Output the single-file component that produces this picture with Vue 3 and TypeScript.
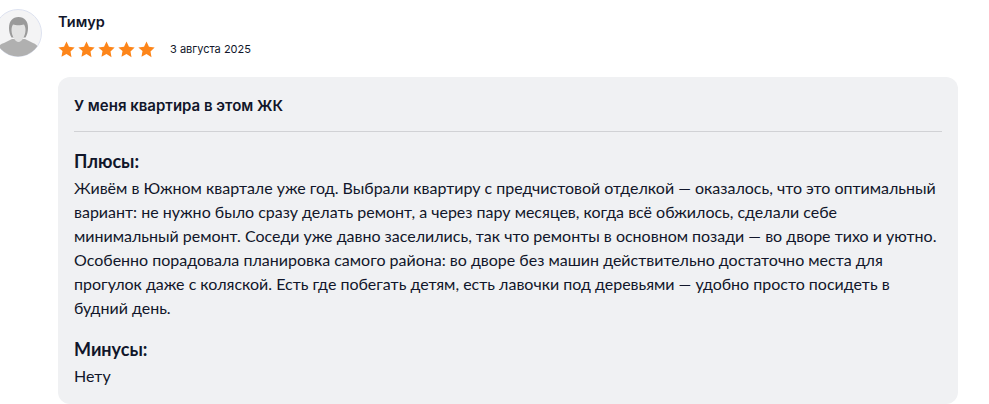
<script setup lang="ts">
const review = {
  name: 'Тимур',
  date: '3 августа 2025',
  title: 'У меня квартира в этом ЖК',
  pros: 'Живём в Южном квартале уже год. Выбрали квартиру с предчистовой отделкой — оказалось, что это оптимальный вариант: не нужно было сразу делать ремонт, а через пару месяцев, когда всё обжилось, сделали себе минимальный ремонт. Соседи уже давно заселились, так что ремонты в основном позади — во дворе тихо и уютно. Особенно порадовала планировка самого района: во дворе без машин действительно достаточно места для прогулок даже с коляской. Есть где побегать детям, есть лавочки под деревьями — удобно просто посидеть в будний день.',
  cons: 'Нету',
}
</script>

<template>
  <div class="review">
    <header class="head">
      <svg class="avatar" viewBox="0 0 48 48">
        <defs>
          <clipPath id="avatar-clip"><circle cx="24" cy="24" r="23.5" /></clipPath>
        </defs>
        <circle cx="24" cy="24" r="23.5" fill="#f4f4f5" stroke="#dde2f0" />
        <g clip-path="url(#avatar-clip)">
          <path d="M1 48c0-8 3-12 9-14l8-4h13l8 4c5 2 8 6 8 14z" fill="#b0b0b0" />
          <path d="M15 19c0-7 3.500-11 9.500-11S34 12 34 19c0 4-1 7-2.500 9.500H17.500C16 26 15 23 15 19z" fill="#9a9a9a" />
          <path d="M17.500 21c0-2 .5-4 1.500-5.500 3 1 8 1 11 0 1 1.500 1.500 3.500 1.500 5.500 0 3-1 6-2.500 8.500-1.200 2-2.800 3.500-4.500 3.500s-3.300-1.500-4.500-3.500C18.500 27 17.500 24 17.500 21z" fill="#e2e2e2" />
        </g>
      </svg>
      <div class="meta">
        <div class="name">{{ review.name }}</div>
        <div class="rating">
          <div class="stars">
            <svg v-for="i in 5" :key="i" class="star" viewBox="0 0 20 20">
              <path d="M10 .6l2.900 6.100 6.700.9-4.900 4.700 1.200 6.700L10 15.300 4.100 18.500l1.200-6.700L.4 7.600l6.700-.9z" fill="#fd8519" />
            </svg>
          </div>
          <span class="date">{{ review.date }}</span>
        </div>
      </div>
    </header>

    <section class="card">
      <div class="title">{{ review.title }}</div>
      <div class="block">
        <h3>Плюсы:</h3>
        <p>{{ review.pros }}</p>
      </div>
      <div class="block">
        <h3>Минусы:</h3>
        <p>{{ review.cons }}</p>
      </div>
    </section>
  </div>
</template>

<style scoped>
.review {
  padding: 9px 31px 0 0;
  color: #11162a;
  font-family: Lato, "Noto Sans", sans-serif;
}

.head {
  display: flex;
  gap: 16px;
  margin-left: -6px;
}

.avatar {
  width: 48px;
  height: 48px;
  flex: none;
}

.meta {
  padding-top: 3px;
}

.name {
  font-family: Inter, sans-serif;
  font-weight: 600;
  font-size: 14.5px;
  line-height: 20px;
}

.rating {
  display: flex;
  align-items: center;
  margin-top: 9px;
}

.stars {
  display: flex;
  gap: 3px;
}

.star {
  display: block;
  width: 17px;
  height: 17px;
}

.date {
  margin: -2px 0 0 15px;
  font-family: Inter, sans-serif;
  font-size: 11px;
  line-height: 16px;
}

.card {
  margin: 19px 0 0 58px;
  padding: 19px 16px 16px;
  background: #f0f1f3;
  border-radius: 12px;
}

.title {
  padding-bottom: 15px;
  border-bottom: 1px solid #d1d2d5;
  font-family: Inter, sans-serif;
  font-weight: 600;
  font-size: 15px;
  line-height: 20px;
}

.block {
  margin-top: 17px;
}

h3 {
  margin: 0 0 3px;
  font-size: 18px;
  font-weight: 700;
  line-height: 24px;
}

p {
  margin: 0;
  font-size: 16px;
  line-height: 24px;
}
</style>

<style>
body {
  background: #fff;
  overflow: hidden;
}
</style>
